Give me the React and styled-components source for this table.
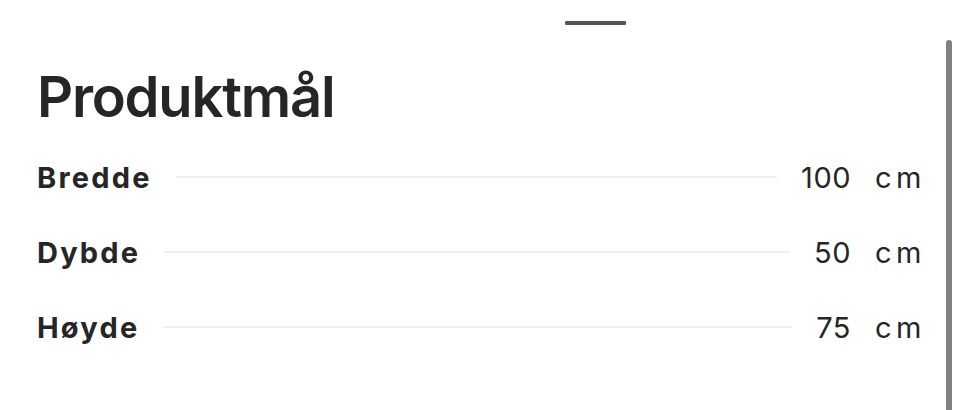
import React from 'react';
import styled, { createGlobalStyle } from 'styled-components';

const GlobalStyle = createGlobalStyle`
  html, body {
    margin: 0;
    background: #ffffff;
  }
  body {
    font-family: Inter, "Noto Sans", "Liberation Sans", sans-serif;
    color: #262626;
  }
`;

export const Sheet = styled.section`
  width: 960px;
  height: 410px;
  overflow: hidden;
  display: flex;
  flex-direction: column;
`;

export const Handle = styled.div`
  width: 61px;
  height: 4px;
  margin: 21px 0 0 565px;
  background: #555555;
  border-radius: 1px;
`;

export const Body = styled.div`
  flex: 1;
  display: flex;
  padding-top: 15px;
`;

export const Content = styled.div`
  flex: 1;
  padding: 22px 23px 0 37px;
`;

export const Scrollbar = styled.div`
  width: 6px;
  margin-right: 8px;
  background: #808080;
  border-radius: 3px 3px 0 0;
`;

export const Title = styled.h2`
  margin: 0 0 22px;
  font-size: 56px;
  font-weight: 600;
  letter-spacing: -1.2px;
  line-height: 70px;
`;

export const List = styled.dl`
  margin: 0;
  display: flex;
  flex-direction: column;
  gap: 30px;
`;

export const Row = styled.div`
  display: flex;
  align-items: center;
  gap: 24px;
  height: 44px;
  font-size: 29px;
  padding-top: 1px;
`;

export const Label = styled.dt`
  font-weight: 700;
  letter-spacing: 2.2px;
`;

export const Rule = styled.span`
  flex: 1;
  height: 2px;
  background: #efefef;
`;

export const Value = styled.dd`
  margin: 0;
  font-weight: 400;
  letter-spacing: 0.5px;
`;

export const Unit = styled.span`
  width: 48px;
  font-weight: 400;
  letter-spacing: 4.5px;
  white-space: nowrap;
`;

const dims = [
  { label: 'Bredde', value: 100 },
  { label: 'Dybde', value: 50 },
  { label: 'Høyde', value: 75 },
];

const App = () => (
  <>
    <GlobalStyle />
    <Sheet>
      <Handle />
      <Body>
        <Content>
          <Title>Produktmål</Title>
          <List>
            {dims.map((d) => (
              <Row key={d.label}>
                <Label>{d.label}</Label>
                <Rule />
                <Value>{d.value}</Value>
                <Unit>cm</Unit>
              </Row>
            ))}
          </List>
        </Content>
        <Scrollbar />
      </Body>
    </Sheet>
  </>
);

export default App;
